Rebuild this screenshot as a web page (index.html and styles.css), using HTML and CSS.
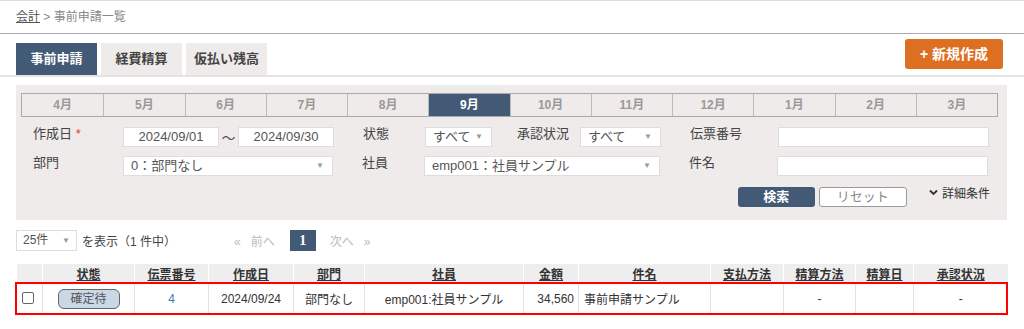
FILE: index.html
```html
<!DOCTYPE html>
<html>
<head>
<meta charset="UTF-8">
<title>事前申請一覧</title>
<link rel="stylesheet" href="styles.css">
</head>
<body>

	<div class="breadcrumb">
		<a href="#">会計</a> &gt; 事前申請一覧
	</div>

	<div class="tabbar">
		<div class="tabs">
			<span class="tab active">事前申請</span>
			<span class="tab">経費精算</span>
			<span class="tab">仮払い残高</span>
		</div>
		<span class="btnNew">+ 新規作成</span>
	</div>

	<div class="panel">
		<div class="months">
			<span>4月</span><span>5月</span><span>6月</span><span>7月</span>
			<span>8月</span><span class="cur">9月</span><span>10月</span><span>11月</span>
			<span>12月</span><span>1月</span><span>2月</span><span>3月</span>
		</div>

		<div class="frow">
			<span class="lbl l1">作成日 <em>*</em></span>
			<span class="inp date">2024/09/01</span>
			<span class="tilde">～</span>
			<span class="inp date">2024/09/30</span>
			<span class="lbl l2">状態</span>
			<span class="sel s-state">すべて<i>▼</i></span>
			<span class="lbl l3">承認状況</span>
			<span class="sel s-appr">すべて<i>▼</i></span>
			<span class="lbl l4">伝票番号</span>
			<span class="inp wide"></span>
		</div>

		<div class="frow">
			<span class="lbl l1">部門</span>
			<span class="sel s-dept">0：部門なし<i>▼</i></span>
			<span class="lbl l2">社員</span>
			<span class="sel s-emp">emp001：社員サンプル<i>▼</i></span>
			<span class="lbl l4">件名</span>
			<span class="inp wide"></span>
		</div>

		<div class="brow">
			<span class="btnSearch">検索</span>
			<span class="btnReset">リセット</span>
			<span class="detail">
				<svg width="9" height="7" viewBox="0 0 9 7"><path d="M1 1.5 L4.5 5 L8 1.5" fill="none" stroke="#333" stroke-width="1.8"/></svg>
				詳細条件
			</span>
		</div>
	</div>

	<div class="pager">
		<span class="sel s-num">25件<i>▼</i></span>
		<span class="cnt">を表示（1 件中）</span>
		<span class="pg prev">«&nbsp;&nbsp; 前へ</span>
		<span class="pgnum">1</span>
		<span class="pg next">次へ &nbsp;&nbsp;»</span>
	</div>

	<div class="listWrap">
		<table class="list">
			<colgroup>
				<col style="width:26px"><col style="width:92px"><col style="width:74px">
				<col style="width:85px"><col style="width:71px"><col style="width:159px">
				<col style="width:55px"><col style="width:132px"><col style="width:73px">
				<col style="width:72px"><col style="width:58px"><col style="width:94px">
			</colgroup>
			<tr class="head">
				<td></td>
				<td><a href="#">状態</a></td>
				<td><a href="#">伝票番号</a></td>
				<td><a href="#">作成日</a></td>
				<td><a href="#">部門</a></td>
				<td><a href="#">社員</a></td>
				<td><a href="#">金額</a></td>
				<td><a href="#">件名</a></td>
				<td><a href="#">支払方法</a></td>
				<td><a href="#">精算方法</a></td>
				<td><a href="#">精算日</a></td>
				<td><a href="#">承認状況</a></td>
			</tr>
			<tr class="row">
				<td><span class="chk"></span></td>
				<td><span class="badge">確定待</span></td>
				<td><a href="#" class="num">4</a></td>
				<td>2024/09/24</td>
				<td>部門なし</td>
				<td>emp001:社員サンプル</td>
				<td class="right">34,560</td>
				<td class="left">事前申請サンプル</td>
				<td></td>
				<td>-</td>
				<td></td>
				<td>-</td>
			</tr>
		</table>
		<div class="mark"></div>
	</div>

</body>
</html>
```

FILE: styles.css
```css
body {
	margin: 0;
	font-family: "Liberation Sans", "Noto Sans CJK JP", sans-serif;
	font-size: 13px;
	color: #333;
	background: #fff;
	border-top: 1px solid #ddd;
}

a {
	color: #333;
}

.breadcrumb {
	height: 32px;
	line-height: 32px;
	padding-left: 16px;
	font-size: 12px;
	color: #888;
	border-bottom: 1px solid #aaa;
}

.breadcrumb a {
	color: #555;
}

.tabbar {
	display: flex;
	justify-content: space-between;
	align-items: flex-start;
	margin-top: 5px;
	padding: 0 21px 0 16px;
	border-bottom: 2px solid #e3e3e3;
}

.tabs {
	display: flex;
	gap: 4px;
	padding-top: 4px;
}

.tab {
	width: 81px;
	height: 32px;
	line-height: 32px;
	text-align: center;
	background: #eeebea;
	color: #444;
	font-weight: bold;
	font-size: 13px;
}

.tab.active {
	background: #435a76;
	color: #fff;
}

.btnNew {
	width: 98px;
	height: 30px;
	line-height: 30px;
	text-align: center;
	background: #dc6f22;
	color: #fff;
	font-weight: bold;
	font-size: 14px;
	border-radius: 3px;
}

.panel {
	margin: 8px 17px 0 16px;
	padding: 8px 9px 13px 5px;
	background: #eeebea;
}

.months {
	display: grid;
	grid-template-columns: repeat(12, 1fr);
	border: 1px solid #aaa;
	height: 22px;
}

.months span {
	line-height: 22px;
	text-align: center;
	font-weight: bold;
	font-size: 12px;
	color: #999;
	border-left: 1px solid #bbb;
}

.months span:first-child {
	border-left: none;
}

.months .cur {
	background: #435a76;
	color: #fff;
}

.frow {
	display: flex;
	align-items: center;
	height: 20px;
	margin-top: 10px;
}

.frow + .frow {
	margin-top: 9px;
}

.lbl {
	color: #444;
	font-size: 13px;
	align-self: flex-start;
	line-height: 14px;
}

.lbl em {
	color: #e33;
	font-style: normal;
}

.l1 {
	width: 90px;
	margin-left: 12px;
}

.l2 {
	width: 62px;
	margin-left: 29px;
}

.l3 {
	width: 63px;
	margin-left: 25px;
	text-align: left;
}

.l4 {
	width: 88px;
	margin-left: 29px;
}

.inp,
.sel {
	box-sizing: border-box;
	height: 20px;
	line-height: 18px;
	background: #fff;
	border: 1px solid #ddd;
	color: #555;
	font-size: 13px;
}

.inp.date {
	width: 96px;
	text-align: center;
}

.tilde {
	width: 19px;
	text-align: center;
	color: #555;
	font-size: 14px;
}

.inp.wide {
	width: 211px;
}

.sel {
	display: flex;
	justify-content: space-between;
	padding: 0 8px 0 7px;
}

.sel i {
	font-style: normal;
	font-size: 8px;
	color: #999;
}

.s-state { width: 67px; }
.s-appr { width: 81px; }
.s-dept { width: 210px; }
.s-emp { width: 236px; }

.brow {
	display: flex;
	align-items: center;
	justify-content: flex-end;
	margin-top: 11px;
	padding-right: 8px;
}

.btnSearch {
	width: 77px;
	height: 20px;
	line-height: 20px;
	text-align: center;
	background: #435a76;
	color: #fff;
	font-weight: bold;
	border-radius: 3px;
}

.btnReset {
	box-sizing: border-box;
	width: 88px;
	height: 20px;
	line-height: 18px;
	margin-left: 4px;
	text-align: center;
	background: #fff;
	border: 1px solid #999;
	color: #888;
	border-radius: 3px;
}

.detail {
	margin-left: 22px;
	color: #333;
	align-self: flex-start;
	margin-top: -3px;
	font-size: 12px;
}

.detail svg {
	vertical-align: 2px;
	margin-right: 1px;
}

.pager {
	display: flex;
	align-items: center;
	margin: 10px 0 0 16px;
	height: 21px;
	font-size: 12px;
}

.s-num {
	width: 61px;
	height: 21px;
	line-height: 19px;
	padding: 0 6px;
	font-size: 12px;
}

.cnt {
	margin-left: 5px;
	color: #444;
}

.pg {
	color: #bbb;
}

.prev {
	margin-left: 58px;
}

.pgnum {
	width: 26px;
	height: 21px;
	line-height: 21px;
	margin: 0 14px 0 15px;
	text-align: center;
	background: #435a76;
	color: #fff;
	font-family: "Liberation Serif", serif;
	font-weight: bold;
	font-size: 14px;
}

.listWrap {
	position: relative;
	margin: 13px 17px 0 16px;
}

.list {
	width: 991px;
	border-collapse: collapse;
	table-layout: fixed;
	font-size: 12px;
}

.list td {
	text-align: center;
	padding: 0;
	white-space: nowrap;
}

.head td {
	height: 19px;
	background: #eeeeee;
	border-left: 1px solid #fff;
	font-weight: bold;
}

.head td a {
	color: #333;
}

.row td {
	height: 31px;
	border-left: 1px solid #e3e3e3;
	border-bottom: 1px solid #e3e3e3;
	color: #333;
}

.row td:first-child {
	border-left: none;
}

.row td.right {
	text-align: right;
	padding-right: 4px;
}

.row td.left {
	text-align: left;
	padding-left: 5px;
}

.chk {
	display: inline-block;
	box-sizing: border-box;
	width: 12px;
	height: 12px;
	border: 1px solid #666;
	border-radius: 2px;
	background: #fff;
	vertical-align: -1px;
	margin-right: 2px;
}

.badge {
	display: inline-block;
	box-sizing: border-box;
	width: 62px;
	height: 20px;
	line-height: 18px;
	background: #c9d7e6;
	border: 1px solid #666;
	border-radius: 6px;
	color: #555;
	font-size: 12px;
}

.num {
	color: #3a7cc0;
	text-decoration: none;
}

.mark {
	position: absolute;
	left: -1px;
	right: -1px;
	top: 18px;
	height: 33px;
	border: 2px solid #ff0000;
	box-sizing: border-box;
}
```
